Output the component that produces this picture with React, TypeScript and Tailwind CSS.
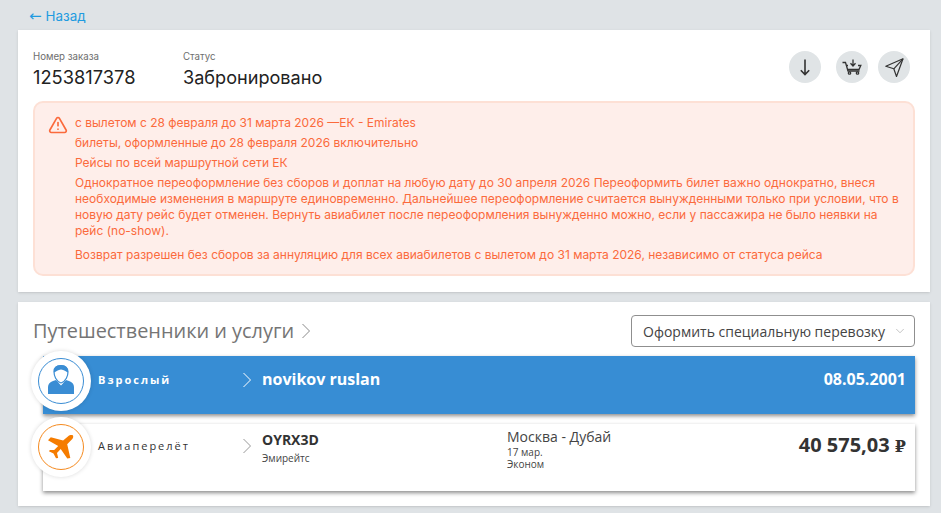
import { ChevronDown, TriangleAlert } from 'lucide-react';

const alertLines = [
  'с вылетом с 28 февраля до 31 марта 2026 —ЕК - Emirates',
  'билеты, оформленные до 28 февраля 2026 включительно',
  'Рейсы по всей маршрутной сети ЕК',
];

function Chevron({ color, className }: { color: string; className?: string }) {
  return (
    <svg width="10" height="16" viewBox="0 0 10 16" fill="none" stroke={color} strokeWidth="1" className={`shrink-0 ${className ?? ''}`}>
      <path d="M1.500 1l7 7-7 7" />
    </svg>
  );
}

function DownIcon() {
  return (
    <svg width="16" height="17" viewBox="0 0 16 17" fill="none" stroke="#333" strokeWidth="1.600">
      <path d="M8 .5v15M3.800 11.200L8 15.500l4.200-4.300" />
    </svg>
  );
}

function CartIcon() {
  return (
    <svg width="20" height="16" viewBox="0 0 20 16" fill="none" stroke="#333" strokeWidth="1.300">
      <path d="M.5 3.500h3L6 12h11.500" />
      <path d="M4.500 6.500h1.500M16 6.500h2.800L17 10.500H5.500" />
      <path d="M11 .5v6M8.500 4.300L11 7l2.500-2.700" />
      <circle cx="7.500" cy="14" r="1.200" />
      <circle cx="15.500" cy="14" r="1.200" />
    </svg>
  );
}

function SendIcon() {
  return (
    <svg width="19" height="19" viewBox="0 0 19 19" fill="none" stroke="#333" strokeWidth="1.200" strokeLinejoin="round">
      <path d="M18 .8L.8 8.300l8 2.500 2.700 7.700z" />
      <path d="M18 .8L8.800 10.800" />
    </svg>
  );
}

function PersonIcon() {
  return (
    <svg width="26" height="29" viewBox="0 0 26 29" fill="#3a8dd4">
      <path d="M13 .7C8.500 .7 6 3.200 6 6.700c0 4 2 9.800 7 11.300 5-1.500 7-7.300 7-11.300 0-3.500-2.500-6-7-6z" fill="none" stroke="#3a8dd4" strokeWidth="1.200" />
      <path d="M6 7.500c2-.5 4-3 7-3s5 2.500 7 3c.5-4.500-2-7.500-7-7.500S5.500 3 6 7.500z" />
      <path d="M0 29v-7c0-3 2-5 5-6l3-1 5 5.500 5-5.500 3 1c3 1 5 3 5 6v7z" />
    </svg>
  );
}

function PlaneIcon() {
  return (
    <svg width="26" height="24" viewBox="0 0 26 24" fill="#f57c00">
      <path d="M25 .6c.6 1.400-.2 3-1.200 4l-4.600 4.700L22.300 23l-3 .6L12.700 14l-3.700 4 1.200 5-2.200.2-2.500-4.800L.9 16.300l1-1.300 4.300-.1 4-4L0 5.200 2.800 2.200l12.300 3.200 4.800-4c1.500-1.100 3.900-1.800 5.100-.8z" />
    </svg>
  );
}

export default function App() {
  return (
    <div className="h-[513px] overflow-hidden bg-[#dfe3e6] pl-[18px] pr-[11px] font-['Open_Sans',sans-serif]">
      <div className="flex h-[30px] items-baseline pl-[11px] pt-[6px] text-[13.4px] leading-[20px] text-[#1e9be0] font-['Inter',sans-serif]">
        <span className="mr-[4px] font-['DejaVu_Sans',sans-serif] text-[15px]">←</span>Назад
      </div>

      <div className="h-[262px] bg-white px-[15px] pt-[20px] shadow-sm">
        <div className="flex h-[51px] items-start font-['Inter',sans-serif]">
          <div className="w-[150px]">
            <div className="text-[9.7px] leading-[14px] text-[#6e6e6e]">Номер заказа</div>
            <div className="text-[18.3px] leading-[26px] text-[#222]">1253817378</div>
          </div>
          <div className="flex-1">
            <div className="text-[9.7px] leading-[14px] text-[#6e6e6e]">Статус</div>
            <div className="text-[18.1px] leading-[26px] text-[#222]">Забронировано</div>
          </div>
          <div className="mt-[1px] flex pr-[5px]">
            <button className="mr-[15px] flex h-8 w-8 items-center justify-center rounded-full bg-[#e0e4e6]">
              <DownIcon />
            </button>
            <button className="mr-[10px] flex h-8 w-8 items-center justify-center rounded-full bg-[#e0e4e6]">
              <CartIcon />
            </button>
            <button className="flex h-8 w-8 items-center justify-center rounded-full bg-[#e0e4e6]">
              <SendIcon />
            </button>
          </div>
        </div>

        <div className="flex h-[175px] gap-[7px] rounded-[10px] border-2 border-[#fde0d5] bg-[#feeeea] pl-[13px] pr-[10px] pt-[10px] font-['Inter',sans-serif] text-[12px] leading-[20px] text-[#fb6a3c]">
          <TriangleAlert size={20} color="#fb6a3c" className="mt-[2px] shrink-0" />
          <div className="min-w-0 flex-1">
            {alertLines.map(line => (
              <div key={line}>{line}</div>
            ))}
            <div className="mt-[2px] leading-[16px]">
              Однократное переоформление без сборов и доплат на любую дату до 30 апреля 2026 Переоформить билет важно однократно, внеся необходимые изменения в маршруте единовременно. Дальнейшее переоформление считается вынужденными только при условии, что в новую дату рейс будет отменен. Вернуть авиабилет после переоформления вынужденно можно, если у пассажира не было неявки на рейс (no-show).
            </div>
            <div className="mt-[6px]">Возврат разрешен без сборов за аннуляцию для всех авиабилетов с вылетом до 31 марта 2026, независимо от статуса рейса</div>
          </div>
        </div>
      </div>

      <div className="mt-[10px] h-[204px] bg-white px-[15px] shadow-sm">
        <div className="flex h-[54px] items-center justify-between pt-[4px]">
          <div className="flex items-center text-[19.9px] text-[#757575]">
            Путешественники и услуги
            <Chevron color="#8a8a8a" className="ml-[7px] mt-[1px]" />
          </div>
          <div className="flex h-8 w-[284px] items-center justify-between rounded-[4px] border border-[#8f8f8f] pl-[11px] pr-[7px] text-[14px] text-[#444]">
            Оформить специальную перевозку
            <ChevronDown size={14} strokeWidth={1} color="#999" />
          </div>
        </div>

        <div className="relative ml-[10px] h-[58px] bg-[#378dd4] text-white shadow-[0_2px_4px_rgba(0,0,0,0.45)]">
          <div className="absolute -left-[12px] -top-[5px] flex h-[60px] w-[60px] items-center justify-center rounded-full bg-white shadow-[0_0_4px_rgba(0,0,0,0.15)]">
            <div className="flex h-[46px] w-[46px] items-center justify-center rounded-full border border-[#3a8dd4] pb-[3px]">
              <PersonIcon />
            </div>
          </div>
          <div className="flex items-start">
            <div className="mt-[16px] w-[199px] pl-[55px] text-[11px] leading-[16px] font-bold tracking-[2px]">Взрослый</div>
            <Chevron color="#ffffff" className="mt-[16px]" />
            <div className="ml-[10px] mt-[12px] flex-1 text-[16px] leading-[22px] font-bold">novikov ruslan</div>
            <div className="mr-[9px] mt-[12px] text-[16px] leading-[22px] font-bold">08.05.2001</div>
          </div>
        </div>

        <div className="relative ml-[10px] mt-[10px] h-[67px] bg-white shadow-[0_2px_4px_rgba(0,0,0,0.45)]">
          <div className="absolute -left-[12px] -top-[7px] flex h-[60px] w-[60px] items-center justify-center rounded-full bg-white shadow-[0_0_4px_rgba(0,0,0,0.15)]">
            <div className="flex h-[46px] w-[46px] items-center justify-center rounded-full border border-[#f58a1f]">
              <PlaneIcon />
            </div>
          </div>
          <div className="flex items-start">
            <div className="mt-[14px] w-[199px] pl-[55px] text-[11px] leading-[16px] tracking-[2px] text-[#333]">Авиаперелёт</div>
            <Chevron color="#999" className="mt-[14px]" />
            <div className="ml-[10px] mt-[7px] w-[245px]">
              <div className="text-[14px] leading-[18px] font-bold text-[#333]">OYRX3D</div>
              <div className="mt-[1px] text-[10px] leading-[16px] text-[#444]">Эмирейтс</div>
            </div>
            <div className="mt-[4px] flex-1 text-[10px] leading-[12px] text-[#444]">
              <div className="text-[14px] leading-[18px]">Москва - Дубай</div>
              <div>17 мар.</div>
              <div>Эконом</div>
            </div>
            <div className="mr-[9px] mt-[8px] text-[20px] leading-[26px] font-bold text-[#333]">
              40 575,03 <span className="font-['DejaVu_Serif',serif] text-[16px]">₽</span>
            </div>
          </div>
        </div>
      </div>
    </div>
  );
}
